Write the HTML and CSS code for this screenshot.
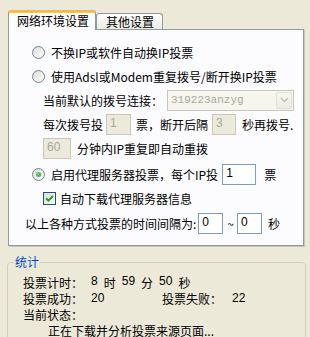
FILE: index.html
```html
<html>
	<head>
		<title>投票设置</title>
		<meta charset="UTF-8">
		<link rel="stylesheet" href="styles.css">
	</head>
	<body>
		<div class="tabs">
			<div class="tab active">网络环境设置</div>
			<div class="tab">其他设置</div>
		</div>
		<div class="panel">
			<div class="row">
				<span class="radio"></span>
				<span class="lbl">不换IP或软件自动换IP投票</span>
			</div>
			<div class="row">
				<span class="radio"></span>
				<span class="lbl">使用Adsl或Modem重复拨号/断开换IP投票</span>
			</div>
			<div class="row sub">
				<span>当前默认的拨号连接：</span>
				<span class="select">
					<span class="select-text">319223anzyg</span>
					<span class="select-btn">
						<svg width="9" height="6" viewBox="0 0 9 6"><path d="M1 1 L4.5 4.5 L8 1" fill="none" stroke="#C6C4B8" stroke-width="1.6"/></svg>
					</span>
				</span>
			</div>
			<div class="row sub">
				<span>每次拨号投</span>
				<span class="field off w25 gap3">1</span>
				<span class="gap5">票，断开后隔</span>
				<span class="field off w24 gap4">3</span>
				<span class="gap6">秒再拨号.</span>
			</div>
			<div class="row sub">
				<span class="field off w28">60</span>
				<span class="gap6">分钟内IP重复即自动重拨</span>
			</div>
			<div class="row proxy">
				<span class="radio on"></span>
				<span class="lbl">启用代理服务器投票，每个IP投</span>
				<span class="field w34 gap4">1</span>
				<span class="gap8">票</span>
			</div>
			<div class="row sub">
				<span class="check">
					<svg width="11" height="11" viewBox="0 0 11 11"><path d="M2 5.2 L4.4 7.6 L9 3" fill="none" stroke="#21A121" stroke-width="2"/></svg>
				</span>
				<span class="lbl">自动下载代理服务器信息</span>
			</div>
			<div class="row interval">
				<span>以上各种方式投票的时间间隔为:</span>
				<span class="field w25 gap2">0</span>
				<span class="gap4">~</span>
				<span class="field w25 gap3">0</span>
				<span class="gap6">秒</span>
			</div>
		</div>

		<fieldset class="stats">
			<legend>统计</legend>
			<div class="stat">
				<span class="key">投票计时：</span>
				<span class="time">
					<span class="num">8</span><span>时</span><span class="num">59</span><span>分</span><span class="num">50</span><span>秒</span>
				</span>
			</div>
			<div class="stat">
				<span class="key">投票成功：</span>
				<span class="num val">20</span>
				<span class="key2">投票失败：</span>
				<span class="num">22</span>
			</div>
			<div class="stat">
				<span class="key">当前状态：</span>
			</div>
			<div class="stat status">正在下载并分析投票来源页面...</div>
		</fieldset>
	</body>
</html>
```

FILE: styles.css
```css
html, body {
	box-sizing: border-box;
	margin: 0;
	padding: 0;
	background-color: #ECE9D8;
	font-family: 'Noto Sans CJK SC', sans-serif;
	font-size: 12px;
	color: #000;
	overflow: hidden;
}

.tabs {
	display: flex;
	align-items: flex-end;
	height: 19px;
	padding: 10px 0 0 8px;
}

.tab {
	box-sizing: border-box;
	height: 16px;
	width: 67px;
	padding-left: 9px;
	line-height: 15px;
	border: 1px solid #919B9C;
	border-bottom: none;
	border-radius: 3px 3px 0 0;
	background: linear-gradient(#FFFFFF, #ECEBE6);
}

.tab.active {
	position: relative;
	z-index: 1;
	height: 20px;
	width: 88px;
	margin-bottom: -1px;
	padding-left: 8px;
	line-height: 17px;
	border-top: 2px solid #F7B64A;
	background: #FCFCFE;
	box-shadow: inset 0 1px 0 #FFC83C;
}

.panel {
	box-sizing: border-box;
	width: 296px;
	height: 217px;
	margin-left: 8px;
	padding-top: 10px;
	border: 1px solid #919B9C;
	background-color: #FCFCFE;
	box-shadow: 1px 1px 0 #C8C5B4;
}

.row {
	display: flex;
	align-items: center;
	height: 24px;
	padding-left: 14px;
	white-space: nowrap;
}

.row.sub {
	padding-left: 34px;
}

.row.proxy {
	margin-top: 2px;
}

.row.interval {
	margin-top: 1px;
	padding-left: 16px;
}

.radio {
	box-sizing: border-box;
	display: flex;
	align-items: center;
	justify-content: center;
	width: 13px;
	height: 13px;
	margin-left: 9px;
	border: 1px solid #6E86A6;
	border-radius: 50%;
	background: linear-gradient(135deg, #DCDBD3, #FFFFFF);
}

.radio.on::after {
	content: '';
	width: 5px;
	height: 5px;
	border-radius: 50%;
	background: radial-gradient(circle at 40% 40%, #7BD67B, #1E9E1E);
}

.check {
	box-sizing: border-box;
	display: flex;
	align-items: center;
	justify-content: center;
	width: 13px;
	height: 13px;
	margin-left: 9px;
	border: 1px solid #1C5180;
	background: linear-gradient(135deg, #DCDBD3, #FFFFFF);
}

.row .lbl {
	margin-left: 6px;
}

.row.sub .check {
	margin-left: 0;
}

.row.sub .check + .lbl {
	margin-left: 4px;
}

.select {
	box-sizing: border-box;
	display: flex;
	align-items: center;
	width: 127px;
	height: 21px;
	margin-left: 4px;
	border: 1px solid #C9C7BA;
	background-color: #F6F5EE;
}

.select-text {
	flex: 1;
	padding-left: 3px;
	font-family: 'Liberation Mono', monospace;
	font-size: 11px;
	color: #ACA899;
}

.select-btn {
	box-sizing: border-box;
	display: flex;
	align-items: center;
	justify-content: center;
	width: 16px;
	height: 17px;
	margin-right: 1px;
	border: 1px solid #E2E0D4;
	border-radius: 2px;
	background: linear-gradient(#F7F6F1, #EDEBE3);
}

.field {
	box-sizing: border-box;
	height: 21px;
	padding-left: 3px;
	border: 1px solid #7F9DB9;
	background-color: #FFFFFF;
	font-family: 'Liberation Sans', sans-serif;
	font-size: 12px;
	line-height: 17px;
}

.field.off {
	border-color: #C9C7BA;
	background-color: #EBEADB;
	color: #ACA899;
}

.w24 { width: 24px; }
.w25 { width: 25px; }
.w28 { width: 28px; }
.w34 { width: 34px; }

.gap2 { margin-left: 2px; }
.gap3 { margin-left: 3px; }
.gap4 { margin-left: 4px; }
.gap5 { margin-left: 5px; }
.gap6 { margin-left: 6px; }
.gap8 { margin-left: 8px; }

.stats {
	box-sizing: border-box;
	width: 299px;
	margin: 8px 0 0 7px;
	padding: 4px 0 10px 6px;
	border: 1px solid #D0D0BF;
	border-radius: 4px;
}

.stats legend {
	padding: 0 1px;
	line-height: 16px;
	color: #0046D5;
}

.stat {
	display: flex;
	align-items: center;
	height: 16px;
	padding-left: 9px;
	white-space: nowrap;
}

.stat .key {
	width: 68px;
}

.stat .val {
	width: 71px;
}

.stat .key2 {
	width: 70px;
}

.time {
	display: flex;
	gap: 6px;
}

.num {
	font-family: 'Liberation Sans', sans-serif;
}

.stat.status {
	padding-left: 34px;
}
```
